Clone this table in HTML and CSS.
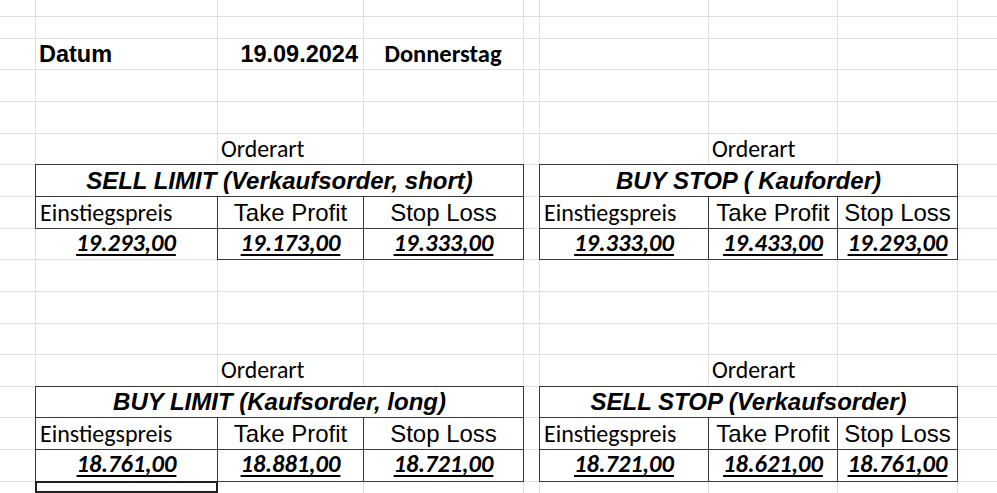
FILE: index.html
```html
<!DOCTYPE html>
<html lang="de">
<head>
<meta charset="utf-8">
<title>Orderarten</title>
<link rel="stylesheet" href="styles.css">
</head>
<body>
<div class="sheet">
  <div class="row h17"></div>
  <div class="row h22"></div>
  <div class="row h31">
    <div class="cell colB datum">Datum</div>
    <div class="cell colC date">19.09.2024</div>
    <div class="cell colD day">Donnerstag</div>
  </div>
  <div class="row h32"></div>
  <div class="row h32"></div>
  <div class="row h31">
    <div class="cell colC label">Orderart</div>
    <div class="cell colG label">Orderart</div>
  </div>
  <div class="row h32">
    <div class="cell span-left title boxed">SELL LIMIT (Verkaufsorder, short)</div>
    <div class="cell span-right title boxed">BUY STOP ( Kauforder)</div>
  </div>
  <div class="row h32">
    <div class="cell colB head-left boxed">Einstiegspreis</div>
    <div class="cell colC head boxed">Take Profit</div>
    <div class="cell colD head boxed">Stop Loss</div>
    <div class="cell colF head-left boxed">Einstiegspreis</div>
    <div class="cell colG head boxed">Take Profit</div>
    <div class="cell colH head boxed">Stop Loss</div>
  </div>
  <div class="row h31">
    <div class="cell colB value">19.293,00</div>
    <div class="cell colC value boxed">19.173,00</div>
    <div class="cell colD value boxed">19.333,00</div>
    <div class="cell colF value boxed">19.333,00</div>
    <div class="cell colG value boxed">19.433,00</div>
    <div class="cell colH value boxed">19.293,00</div>
  </div>
  <div class="row h32"></div>
  <div class="row h32"></div>
  <div class="row h31"></div>
  <div class="row h32">
    <div class="cell colC label">Orderart</div>
    <div class="cell colG label">Orderart</div>
  </div>
  <div class="row h31">
    <div class="cell span-left title boxed">BUY LIMIT (Kaufsorder, long)</div>
    <div class="cell span-right title boxed">SELL STOP (Verkaufsorder)</div>
  </div>
  <div class="row h32">
    <div class="cell colB head-left boxed">Einstiegspreis</div>
    <div class="cell colC head boxed">Take Profit</div>
    <div class="cell colD head boxed">Stop Loss</div>
    <div class="cell colF head-left boxed">Einstiegspreis</div>
    <div class="cell colG head boxed">Take Profit</div>
    <div class="cell colH head boxed">Stop Loss</div>
  </div>
  <div class="row h32">
    <div class="cell colB value boxed">18.761,00</div>
    <div class="cell colC value boxed">18.881,00</div>
    <div class="cell colD value boxed">18.721,00</div>
    <div class="cell colF value boxed">18.721,00</div>
    <div class="cell colG value boxed">18.621,00</div>
    <div class="cell colH value boxed">18.761,00</div>
  </div>
  <div class="row last">
    <div class="cell colB selected"></div>
  </div>
</div>
</body>
</html>
```

FILE: styles.css
```css
html, body {
  margin: 0;
  padding: 0;
  background: #ffffff;
}

body {
  width: 997px;
  height: 493px;
  overflow: hidden;
  font-family: "Liberation Sans", Arial, sans-serif;
  color: #000;
}

.sheet {
  width: 997px;
  height: 493px;
  display: flex;
  flex-direction: column;
  background-image: linear-gradient(to right,
    transparent 0 35px, #e0e0e0 35px 36px,
    transparent 36px 217px, #e0e0e0 217px 218px,
    transparent 218px 363px, #e0e0e0 363px 364px,
    transparent 364px 523px, #e0e0e0 523px 524px,
    transparent 524px 539px, #e0e0e0 539px 540px,
    transparent 540px 708px, #e0e0e0 708px 709px,
    transparent 709px 837px, #e0e0e0 837px 838px,
    transparent 838px 957px, #e0e0e0 957px 958px,
    transparent 958px);
}

.row {
  box-sizing: border-box;
  flex: none;
  display: grid;
  grid-template-columns: 35px 182px 146px 160px 16px 169px 129px 120px 1fr;
  border-bottom: 1px solid #e0e0e0;
}

.h17 { height: 17px; }
.h22 { height: 22px; }
.h31 { height: 31px; }
.h32 { height: 32px; }
.last { flex: 1; border-bottom: 0; }

.cell {
  grid-row: 1;
  white-space: nowrap;
  line-height: 30px;
  min-width: 0;
}

.h32 .cell { line-height: 31px; }

.colB { grid-column: 2; }
.colC { grid-column: 3; }
.colD { grid-column: 4; }
.colF { grid-column: 6; }
.colG { grid-column: 7; }
.colH { grid-column: 8; }
.span-left { grid-column: 2 / 5; }
.span-right { grid-column: 6 / 9; }

.boxed {
  border: 1px solid #3a3a3a;
  margin: -1px -1px -1px 0;
  background: #fff;
}

.value.boxed { border-top: 0; margin-top: 0; }
.value:not(.boxed) {
  border-right: 1px solid #3a3a3a;
  margin-right: -1px;
}

.datum {
  font-weight: bold;
  font-size: 23.5px;
  padding-left: 4px;
}

.date {
  font-weight: bold;
  font-size: 23.5px;
  text-align: right;
  padding-right: 5px;
}

.day {
  font-family: Carlito, Lato, "Open Sans", sans-serif;
  font-weight: bold;
  font-size: 24.5px;
  text-align: center;
}

.label {
  font-family: Carlito, Lato, "Open Sans", sans-serif;
  font-size: 23.8px;
  padding-left: 4px;
}

.h31 .label,
.h32 .label { line-height: 30px; }

.title {
  font-weight: bold;
  font-style: italic;
  font-size: 24px;
  text-align: center;
}

.head {
  font-size: 24px;
  text-align: center;
}

.head-left {
  font-family: Carlito, Lato, "Open Sans", sans-serif;
  font-size: 24px;
  padding-left: 4px;
}

.value {
  font-family: Carlito, Lato, "Open Sans", sans-serif;
  font-weight: bold;
  font-style: italic;
  font-size: 24.5px;
  text-align: center;
  text-decoration: underline;
  text-decoration-thickness: 2px;
  text-underline-offset: 3px;
}

.h31 .value,
.h32 .value { line-height: 29px; }

.selected {
  border: 2px solid #1f1f1f;
  margin: -1px -1px 0 0;
}
```
